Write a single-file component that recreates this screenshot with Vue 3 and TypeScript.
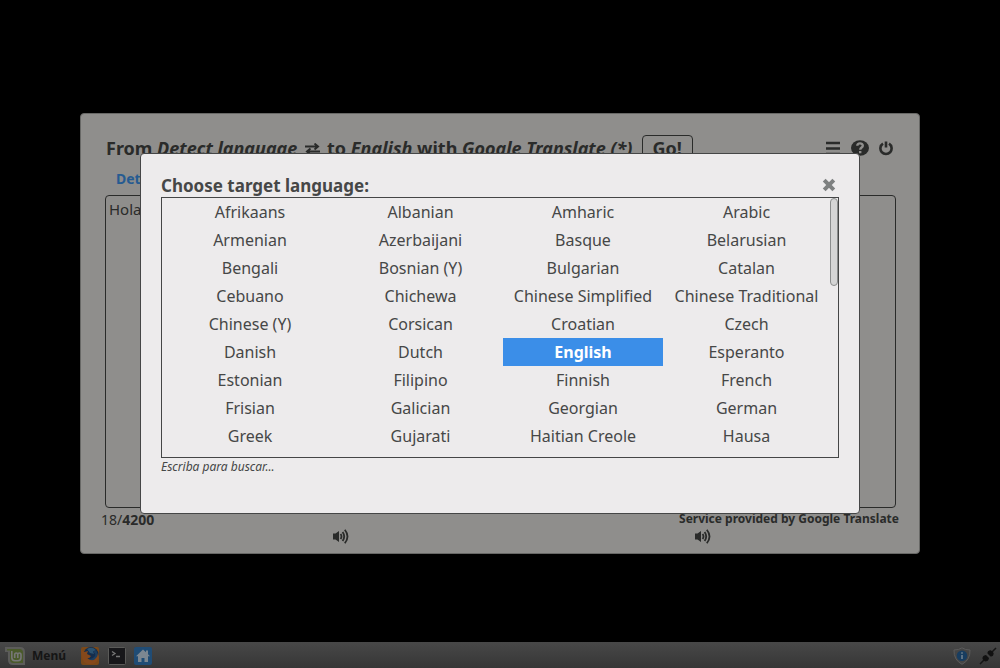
<script setup lang="ts">
import { ref } from 'vue'

const languages: string[] = [
  'Afrikaans', 'Albanian', 'Amharic', 'Arabic',
  'Armenian', 'Azerbaijani', 'Basque', 'Belarusian',
  'Bengali', 'Bosnian (Y)', 'Bulgarian', 'Catalan',
  'Cebuano', 'Chichewa', 'Chinese Simplified', 'Chinese Traditional',
  'Chinese (Y)', 'Corsican', 'Croatian', 'Czech',
  'Danish', 'Dutch', 'English', 'Esperanto',
  'Estonian', 'Filipino', 'Finnish', 'French',
  'Frisian', 'Galician', 'Georgian', 'German',
  'Greek', 'Gujarati', 'Haitian Creole', 'Hausa',
]
const target = ref('English')
const source = ref('Hola')
const result = ref('')
</script>

<template>
  <div class="desktop">
    <main class="stage">
      <section class="window">
        <header class="bar">
          <h1 class="heading">
            From <em>Detect language</em>
            <svg class="swap" viewBox="0 0 15 12" aria-hidden="true">
              <path d="M0 3.5H13M9.5 .6L13 3.5L9.5 6.4M15 8.5H2M5.5 5.6L2 8.5L5.5 11.4" />
            </svg>
            to <em>{{ target }}</em> with <em>Google Translate (*)</em>
          </h1>
          <button class="go" type="button">Go!</button>
          <div class="tools">
            <button type="button" aria-label="Menu">
              <svg width="16" height="16" viewBox="0 0 16 16"><path class="line" d="M1 3H15M1 8.5H15M1 14H15" /></svg>
            </button>
            <button type="button" aria-label="Help">
              <svg width="18" height="16" viewBox="0 0 18 16">
                <ellipse cx="9" cy="8" rx="9" ry="7.7" />
                <path class="mark" d="M6.3 5.8C6.4 2.6 11.8 2.6 11.8 5.7C11.8 7.6 9.2 7.4 9.2 9.7M9.2 10.9V13.2" />
              </svg>
            </button>
            <button type="button" aria-label="Quit">
              <svg width="14" height="16" viewBox="0 0 14 16"><path class="line" d="M4 3.7A5.6 5.6 0 1 0 10 3.7M7 1.5V7.5" /></svg>
            </button>
          </div>
        </header>
        <a class="detected" href="#">Det</a>
        <div class="panes">
          <textarea v-model="source" aria-label="Source text"></textarea>
          <textarea v-model="result" aria-label="Translation"></textarea>
        </div>
        <footer class="status">
          <span class="count">18/<b>4200</b></span>
          <b class="service">Service provided by Google Translate</b>
        </footer>
        <div class="voices">
          <button v-for="side in ['source', 'target']" :key="side" type="button" :aria-label="'Listen to ' + side">
            <svg width="16" height="15" viewBox="0 0 16 15">
              <path d="M0 4.5H2.5L6 2V13L2.5 10.5H0Z" />
              <path class="wave" d="M7.6 5Q9.4 7.5 7.6 10M9.6 3Q12.8 7.5 9.6 12M11.8 .8Q17.2 7.5 11.8 14.2" />
            </svg>
          </button>
        </div>
      </section>
    </main>

    <div class="overlay">
      <section class="dialog" role="dialog" aria-labelledby="choose-title">
        <header class="dialog-head">
          <h2 id="choose-title">Choose target language:</h2>
          <button class="close" type="button" aria-label="Close">
            <svg width="14" height="14" viewBox="0 0 14 14"><path d="M2.2 2.2L11.8 11.8M11.8 2.2L2.2 11.8" /></svg>
          </button>
        </header>
        <div class="list">
          <div class="options">
            <button
              v-for="name in languages"
              :key="name"
              type="button"
              :class="{ selected: name === target }"
              :aria-pressed="name === target"
              @click="target = name"
            >{{ name }}</button>
          </div>
          <div class="track"><div class="thumb"></div></div>
        </div>
        <p class="hint">Escriba para buscar...</p>
      </section>
    </div>

    <nav class="panel">
      <button class="menu" type="button">
        <svg width="22" height="20" viewBox="0 0 22 20">
          <path class="mint-rim" d="M1 1H16Q21 1 21 6V19H9Q4 19 4 14V6H1Z" />
          <path class="mint-fill" d="M3 3H15.5Q19 3 19 6.5V17H9.5Q6 17 6 13.5V4.5H3Z" />
          <path class="mint-mark" d="M7.8 5V11.5Q7.8 14.7 11 14.7H14Q17 14.7 17 11.5V8.8Q17 7 15.4 7Q13.8 7 13.8 8.8V12M13.8 8.8Q13.8 7 12.2 7Q10.7 7 10.7 8.8V12" />
        </svg>
        Menú
      </button>
      <button type="button" aria-label="Firefox">
        <svg width="20" height="20" viewBox="0 0 20 20">
          <rect x="1" y="1" width="18" height="18" rx="2" fill="#7a4818" />
          <circle cx="11" cy="8.5" r="7.5" fill="#152d4c" />
          <path d="M7 3Q12 0 16 4L13 5.5L14 8L10 7Z" fill="#2c526f" />
          <path d="M1 3L4 6L8 5L7 8L11 10Q9 13 7 12Q10 15 14 13Q17 11 18 7Q20 14 15 17Q9 20 4 16Q1 12 1 3Z" fill="#85481b" />
          <path d="M13 6Q16 7 15 10Q13 13 9 13Q13 16 16 12Q19 9 16 4Z" fill="#1c3e60" />
        </svg>
      </button>
      <button type="button" aria-label="Terminal">
        <svg width="18" height="18" viewBox="0 0 18 18">
          <rect x=".5" y=".5" width="17" height="17" rx="1" fill="#17171a" stroke="#5a5a58" />
          <path d="M4 4.5L7 6.5L4 8.5M8 9.5H12" fill="none" stroke="#777" stroke-width="1.3" />
        </svg>
      </button>
      <button type="button" aria-label="Home folder">
        <svg width="18" height="18" viewBox="0 0 18 18">
          <rect width="18" height="18" rx="2" fill="#204c75" />
          <path d="M9 2.5L12 5.3V3.5H14V7.2L16 9.2H14V15H10.5V11H7.5V15H4V9.2H2Z" fill="#7d8791" />
        </svg>
      </button>
      <div class="tray">
        <button type="button" aria-label="Updates">
          <svg width="18" height="18" viewBox="0 0 18 18">
            <path d="M9 .8Q12 3 17 3Q17.4 13 9 17.3Q.6 13 1 3Q6 3 9 .8Z" fill="#454545" stroke="#5b5b5b" />
            <circle cx="9" cy="8.8" r="5.3" fill="#183d60" />
            <path d="M9 8V12M9 5.2V6.7" stroke="#657888" stroke-width="1.8" />
          </svg>
        </button>
        <button type="button" aria-label="Network">
          <svg width="18" height="18" viewBox="0 0 18 18">
            <path d="M1 17L6 12M12 6L17 1" stroke="#151515" stroke-width="1.5" />
            <path d="M3.5 12Q3 8.5 7 8L10 11Q9.5 14.5 6 14.5ZM8.5 6.5Q8 3.5 12 3.3L14.7 6Q14.4 10 11.5 9.5Z" fill="#111" />
          </svg>
        </button>
      </div>
    </nav>
  </div>
</template>

<style>
body {
  margin: 0;
  background: #000;
}
</style>

<style scoped>
.desktop {
  min-height: 100vh;
  display: grid;
  background: #000;
  color: #2a2b2a;
  font-family: "Noto Sans", "Open Sans", sans-serif;
}
.desktop *,
.desktop {
  box-sizing: border-box;
}
button {
  padding: 0;
  border: 0;
  background: none;
  color: inherit;
  font: inherit;
}
svg {
  display: block;
}
.stage {
  display: grid;
  align-items: center;
  padding: 0 8% 2px;
}
.window {
  padding: 20px 20px 9px;
  border: 1px solid #686866;
  border-radius: 4px;
  background: #8f8e8c;
}
.bar {
  display: flex;
  align-items: center;
  height: 30px;
  padding: 0 6px 0 5px;
  white-space: nowrap;
}
.heading {
  margin: 0;
  padding-bottom: 2px;
  font-size: 18px;
  line-height: 24px;
}
.swap {
  display: inline-block;
  width: 15px;
  height: 12px;
  margin: 0 2px 0 8px;
  fill: none;
  stroke: #2a2b2a;
  stroke-width: 2;
}
.go {
  height: 28px;
  margin-left: 9px;
  padding: 0 10px 2px;
  border: 1px solid #2a2b2a;
  border-radius: 4px;
  font-size: 18px;
  font-weight: 700;
  line-height: 24px;
}
.tools {
  display: flex;
  align-items: center;
  gap: 10px;
  margin-left: auto;
  padding-bottom: 2px;
  fill: #2a2b2a;
}
.line {
  fill: none;
  stroke: #2a2b2a;
  stroke-width: 2.6;
}
.mark {
  fill: none;
  stroke: #8f8e8c;
  stroke-width: 2.4;
}
.detected {
  display: block;
  margin: 5px 15px 6px;
  color: #265b91;
  font-size: 14px;
  font-weight: 700;
  line-height: 20px;
  text-decoration: none;
}
.panes {
  display: grid;
  grid-template-columns: 1fr 1fr;
  gap: 10px;
  padding: 0 3px 0 4px;
}
textarea {
  display: block;
  width: 100%;
  height: 313px;
  padding: 3px;
  border: 1px solid #2a2b2a;
  border-radius: 4px;
  background: transparent;
  color: inherit;
  font: 15px/20px "Noto Sans", "Open Sans", sans-serif;
  resize: none;
}
.status {
  display: flex;
  justify-content: space-between;
  height: 20px;
}
.count {
  font-size: 14px;
  line-height: 24px;
}
.service {
  font-size: 12px;
  line-height: 22px;
}
.voices {
  display: flex;
  justify-content: space-around;
  padding: 1px 15px 0 59px;
  fill: #2a2b2a;
}
.wave {
  fill: none;
  stroke: #2a2b2a;
  stroke-width: 1.8;
}
.overlay {
  position: fixed;
  inset: 0;
  display: grid;
  align-items: center;
  padding: 0 14% 2px;
}
.dialog {
  padding: 20px 20px 37px;
  border: 1px solid #454646;
  border-radius: 4px;
  background: #edebec;
  color: #464747;
}
.dialog-head {
  display: flex;
  align-items: center;
  justify-content: space-between;
  padding-right: 3px;
}
h2 {
  margin: 0;
  font-size: 17px;
  line-height: 23px;
}
.close {
  fill: none;
  stroke: #7e8080;
  stroke-width: 4;
}
.list {
  display: flex;
  height: 261px;
  border: 1px solid #454646;
}
.options {
  flex: 1;
  display: grid;
  grid-template-columns: 176fr 165fr 160fr 167fr;
  grid-auto-rows: 28px;
  font-size: 16px;
}
.options button {
  line-height: 28px;
  white-space: nowrap;
}
.options .selected {
  background: #3b8ee8;
  color: #fff;
  font-weight: 700;
}
.track {
  width: 8px;
}
.thumb {
  height: 88px;
  border: 1px solid #8b8d8d;
  border-radius: 4px;
  background: #d5d5d5;
}
.hint {
  margin: 0;
  font-size: 12px;
  font-style: italic;
  line-height: 18px;
}
.panel {
  position: fixed;
  inset: auto 0 0;
  display: flex;
  align-items: center;
  gap: 8px;
  height: 26px;
  padding: 1px 3px 0 4px;
  background: linear-gradient(#484848, #363636);
  color: #151515;
}
.menu {
  display: flex;
  align-items: center;
  gap: 6px;
  margin-right: 6px;
  font-size: 12px;
  font-weight: 700;
}
.mint-rim {
  fill: #5c5c5a;
}
.mint-fill {
  fill: #4a5a2b;
}
.mint-mark {
  fill: none;
  stroke: #777;
  stroke-width: 1.6;
}
.tray {
  display: flex;
  gap: 8px;
  margin-left: auto;
}
</style>
